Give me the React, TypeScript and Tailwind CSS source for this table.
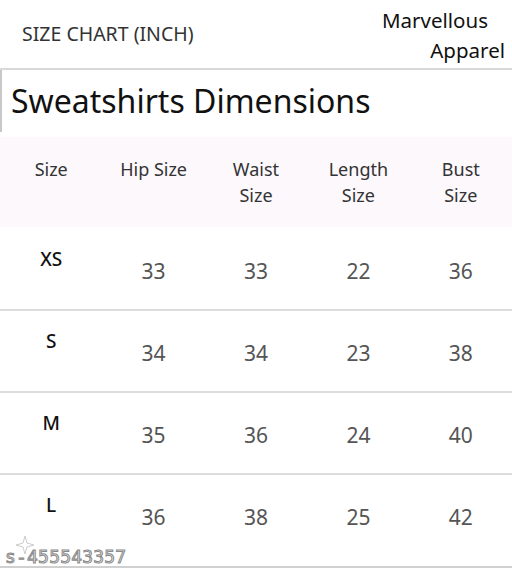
import React from "react";

const rows = [
  { s: "XS", v: ["33", "33", "22", "36"] },
  { s: "S", v: ["34", "34", "23", "38"] },
  { s: "M", v: ["35", "36", "24", "40"] },
  { s: "L", v: ["36", "38", "25", "42"] },
];

export default function App() {
  return (
    <div className="w-[512px] h-[573px] bg-white overflow-hidden relative" style={{ fontFamily: '"Noto Sans", "Open Sans", sans-serif' }}>
      <div className="h-[68px] flex justify-between">
        <div className="pl-[22px] pt-[19px] text-[19.5px] text-[#333]">SIZE CHART (INCH)</div>
        <div className="pt-[5px] pr-[7px] text-right text-[20.5px] leading-[30px] text-[#111]">
          <div className="pr-[17px]">Marvellous</div>
          <div>Apparel</div>
        </div>
      </div>
      <div className="border-t-2 border-[#d8d8d8]">
        <div className="border-l-2 border-[#c8c8c8] h-[62px] pl-[9px] pt-[11px] text-[32px] leading-[40px] text-[#111]">
          Sweatshirts Dimensions
        </div>
      </div>
      <div className="mt-[5px] h-[90px] bg-[#fcf8fc] grid grid-cols-5 text-[18px] leading-[26px] text-[#333] text-center pt-[19px]">
        <div>Size</div>
        <div>Hip Size</div>
        <div>Waist<br />Size</div>
        <div>Length<br />Size</div>
        <div>Bust<br />Size</div>
      </div>
      {rows.map((r, i) => (
        <div key={r.s} className={`grid grid-cols-5 text-center ${i === 0 ? "h-[84px]" : "h-[82px]"} ${i === 3 ? "" : "border-b-2 border-[#dcdcdc]"}`}>
          <div className={`${i === 0 ? "pt-[18px]" : "pt-[16px]"} text-[19px] font-medium text-[#111]`}>{r.s}</div>
          {r.v.map((x, j) => (
            <div key={j} className={`${i === 0 ? "pt-[29px]" : "pt-[27px]"} text-[21px] text-[#555]`}>{x}</div>
          ))}
        </div>
      ))}
      <div className="absolute left-0 right-0 top-[566px] border-t-2 border-[#d0d0d0]" />
      <div className="absolute left-[5px] top-[543px] text-[18px] text-[#eee] tracking-[0.2px]" style={{ fontFamily: '"DejaVu Sans Mono", monospace', WebkitTextStroke: "1px #8a8a8a" }}>s-455543357</div>
      <svg className="absolute left-[14px] top-[534px]" width="22" height="22" viewBox="0 0 22 22">
        <path d="M11 2 L13 9 L20 11 L13 13 L11 20 L9 13 L2 11 L9 9 Z" fill="none" stroke="#ccc" strokeWidth="1" />
      </svg>
    </div>
  );
}
